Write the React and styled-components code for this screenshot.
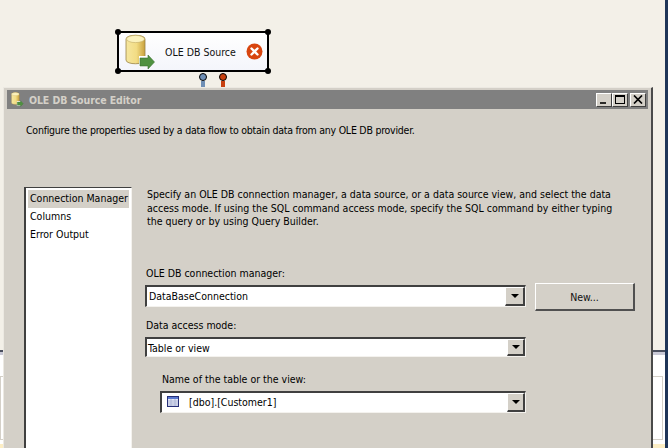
import React from 'react';
import styled, { createGlobalStyle } from 'styled-components';

const GlobalStyle = createGlobalStyle`
  html, body {
    margin: 0;
    height: 100%;
    overflow: hidden;
  }
  body {
    font-family: "DejaVu Sans Condensed", "DejaVu Sans", Tahoma, sans-serif;
    font-size: 10.5px;
    color: #000;
  }
`;

const Page = styled.div`
  position: relative;
  width: 668px;
  height: 448px;
  box-sizing: border-box;
  border-right: 3px solid #1f3558;
  background: #f3f0e8;
  overflow: hidden;
  display: flex;
  flex-direction: column;
`;

const Canvas = styled.div`
  position: relative;
  height: 350px;
  flex: none;
`;

const Node = styled.div`
  position: absolute;
  left: 117px;
  top: 31px;
  width: 152px;
  height: 41px;
  box-sizing: border-box;
  border: 2px solid #000;
  border-radius: 4px;
  background: linear-gradient(#ffffff, #f4f5fb);
  display: flex;
  align-items: center;
  padding: 0 4px 0 6px;
`;

const NodeLabel = styled.span`
  margin-left: 4px;
  flex: 1;
  color: #111;
`;

const Handle = styled.i`
  position: absolute;
  width: 6px;
  height: 6px;
  border-radius: 50%;
  background: #000;
  ${(p) => (p.$top ? 'top: -4px;' : 'bottom: -4px;')}
  ${(p) => (p.$left ? 'left: -4px;' : 'right: -4px;')}
`;

const Port = styled.div`
  position: absolute;
  top: 73px;
  left: ${(p) => p.$x}px;
  width: 8px;
  height: 14px;
  &::before {
    content: '';
    display: block;
    box-sizing: border-box;
    width: 8px;
    height: 8px;
    border-radius: 50%;
    border: 1.5px solid #000;
    background: ${(p) => p.$color};
  }
  &::after {
    content: '';
    display: block;
    width: 4px;
    height: 6px;
    margin-left: 2px;
    background: ${(p) => p.$color};
  }
`;

const BottomPanel = styled.div`
  flex: 1;
  border-top: 2px solid #4a4f5e;
  background: #fff;
  display: flex;
  flex-direction: column;
`;

const PanelStrip = styled.div`
  height: 3px;
  background: #c9c9d6;
`;

const PanelBody = styled.div`
  flex: 1;
  margin: 21px 2px 4px 0;
  border: 1px solid #d4d0c8;
  background: #fff;
`;

const PanelFoot = styled.div`
  height: 4px;
  background: #fdeec4;
`;

const Window = styled.div`
  position: absolute;
  left: 3px;
  top: 87px;
  width: 650px;
  height: 361px;
  box-sizing: border-box;
  padding: 2px 3px 0 3px;
  background: #d4d0c8;
  border-left: 1px solid #ece9e2;
  border-top: 1px solid #ece9e2;
  border-right: 2px solid #4a4a4a;
`;

const TitleBar = styled.div`
  height: 19px;
  background: #808080;
  display: flex;
  align-items: center;
  padding: 0 2px 0 4px;
`;

const TitleText = styled.span`
  margin-left: 3px;
  padding-top: 1px;
  flex: 1;
  font-weight: bold;
  letter-spacing: -0.1px;
  color: #d4d0c8;
`;

const WinButton = styled.button`
  width: 16px;
  height: 14px;
  padding: 0;
  margin-left: ${(p) => (p.$gap ? 2 : 0)}px;
  background: #d4d0c8;
  border: 1px solid;
  border-color: #fff #404040 #404040 #fff;
  display: flex;
  align-items: center;
  justify-content: center;
`;

const Intro = styled.p`
  margin: 0;
  padding: 14px 0 0 19px;
  height: 64px;
  box-sizing: border-box;
  line-height: 14px;
  letter-spacing: -0.24px;
`;

const Body = styled.div`
  display: flex;
  padding-left: 17px;
`;

const NavList = styled.ul`
  width: 108px;
  height: 270px;
  flex: none;
  box-sizing: border-box;
  margin: 14px 0 0;
  padding: 2px;
  list-style: none;
  background: #fff;
  border: 1px solid;
  border-width: 1px 1px 0 2px;
  border-color: #404040 #f4f2ee #404040 #404040;
`;

const NavItem = styled.li`
  height: 18px;
  line-height: 17px;
  padding-left: 2px;
  white-space: nowrap;
  background: ${(p) => (p.$active ? '#d4d0c8' : 'transparent')};
`;

const Content = styled.div`
  margin-left: 13px;
  flex: 1;
  padding-top: 15px;
`;

const Description = styled.p`
  margin: 0 0 0 2px;
  width: 476px;
  height: 78px;
  line-height: 13.5px;
`;

const FieldLabel = styled.label`
  display: block;
  margin: ${(p) => p.$top || 0}px 0 5px ${(p) => (p.$indent ? 17 : 1)}px;
  line-height: 14px;
`;

const Row = styled.div`
  display: flex;
  align-items: flex-start;
  gap: 9px;
  margin-left: ${(p) => (p.$indent ? 15 : 0)}px;
`;

const Combo = styled.div`
  box-sizing: border-box;
  flex: 1;
  max-width: ${(p) => p.$width}px;
  height: ${(p) => p.$height}px;
  display: flex;
  align-items: center;
  background: #fff;
  border: 1px solid;
  border-width: 2px 1px 1px 2px;
  border-color: #404040 #f4f2ee #f4f2ee #404040;
`;

const ComboValue = styled.span`
  flex: 1;
  margin-top: ${(p) => (p.$raised ? -2 : 0)}px;
  padding-left: ${(p) => p.$pad}px;
  display: flex;
  align-items: center;
  gap: 10px;
`;

const ComboArrow = styled.span`
  box-sizing: border-box;
  align-self: stretch;
  width: ${(p) => p.$width}px;
  background: #d4d0c8;
  border: 1px solid;
  border-width: 1px 2px 2px 1px;
  border-color: #fff #404040 #404040 #fff;
  display: flex;
  align-items: center;
  justify-content: center;
  &::after {
    content: '';
    border: 4px solid transparent;
    border-top: 4px solid #000;
    border-bottom: 0;
  }
`;

const PushButton = styled.button`
  width: 100px;
  height: 28px;
  margin: -2px 0 -4px;
  padding: 0;
  font: inherit;
  color: #111;
  background: #d4d0c8;
  border: 1px solid;
  border-width: 1px 2px 2px 1px;
  border-color: #fff #505050 #505050 #fff;
`;

function CylinderIcon({ size = 36 }) {
  return (
    <svg width={size} height={size} viewBox="0 0 36 36">
      <defs>
        <linearGradient id="cyl" x1="0" x2="1" y1="0" y2="0">
          <stop offset="0" stopColor="#f6e7a0" />
          <stop offset="0.55" stopColor="#f2dc84" />
          <stop offset="1" stopColor="#c9a13c" />
        </linearGradient>
      </defs>
      <path d="M1 5 C1 0 20 0 20 5 V26 C20 31 1 31 1 26 Z" fill="url(#cyl)" stroke="#9a8448" strokeWidth="0.8" />
      <ellipse cx="10.5" cy="5" rx="9" ry="3.6" fill="#fbf2bd" stroke="#c2ac68" strokeWidth="0.6" />
      <rect x="14" y="22" width="9" height="11" fill="#fff" />
      <path d="M15 24 H23 V21 L29.5 28 L23 35 V32 H15 Z" fill="#4f9140" stroke="#39702f" strokeWidth="0.6" />
    </svg>
  );
}

function ErrorIcon() {
  return (
    <svg width="17" height="17" viewBox="0 0 17 17">
      <circle cx="8.5" cy="8.5" r="8" fill="#d8450f" />
      <path d="M5.5 5.5 L11.5 11.5 M11.5 5.5 L5.5 11.5" stroke="#fff" strokeWidth="2.4" strokeLinecap="round" />
    </svg>
  );
}

function TableIcon() {
  return (
    <svg width="12" height="11" viewBox="0 0 12 11">
      <rect x="0.5" y="0.5" width="11" height="10" fill="#e4e6f6" stroke="#262f78" />
      <rect x="1" y="1" width="10" height="2" fill="#5a78d0" />
      <path d="M1 5 H11 M1 7 H11 M1 9 H11 M4 3 V10 M8 3 V10" stroke="#a3aed0" strokeWidth="0.8" />
    </svg>
  );
}

function App() {
  return (
    <>
      <GlobalStyle />
      <Page>
        <Canvas>
          <Node>
            <Handle $top $left />
            <Handle $top />
            <Handle $left />
            <Handle />
            <CylinderIcon />
            <NodeLabel>OLE DB Source</NodeLabel>
            <ErrorIcon />
          </Node>
          <Port $x={199} $color="#6f8fb5" />
          <Port $x={219} $color="#c8400f" />
        </Canvas>
        <BottomPanel>
          <PanelStrip />
          <PanelBody />
          <PanelFoot />
        </BottomPanel>

        <Window>
          <TitleBar>
            <CylinderIcon size={15} />
            <TitleText>OLE DB Source Editor</TitleText>
            <WinButton>
              <svg width="10" height="9" viewBox="0 0 10 9"><path d="M1 8 H7" stroke="#000" strokeWidth="1.6" /></svg>
            </WinButton>
            <WinButton>
              <svg width="10" height="9" viewBox="0 0 10 9"><rect x="0.5" y="1" width="9" height="7.5" fill="none" stroke="#000" /><path d="M0 1 H10" stroke="#000" strokeWidth="2" /></svg>
            </WinButton>
            <WinButton $gap>
              <svg width="10" height="9" viewBox="0 0 10 9"><path d="M1 0.5 L9 8.5 M9 0.5 L1 8.5" stroke="#000" strokeWidth="1.7" /></svg>
            </WinButton>
          </TitleBar>
          <Intro>Configure the properties used by a data flow to obtain data from any OLE DB provider.</Intro>
          <Body>
            <NavList>
              <NavItem $active>Connection Manager</NavItem>
              <NavItem>Columns</NavItem>
              <NavItem>Error Output</NavItem>
            </NavList>
            <Content>
              <Description>
                Specify an OLE DB connection manager, a data source, or a data source view, and select the data
                access mode. If using the SQL command access mode, specify the SQL command by either typing
                the query or by using Query Builder.
              </Description>
              <FieldLabel>OLE DB connection manager:</FieldLabel>
              <Row>
                <Combo $width={381} $height={22}>
                  <ComboValue $pad={2} $raised>DataBaseConnection</ComboValue>
                  <ComboArrow $width={20} />
                </Combo>
                <PushButton>New...</PushButton>
              </Row>
              <FieldLabel $top={11}>Data access mode:</FieldLabel>
              <Row>
                <Combo $width={381} $height={20}>
                  <ComboValue $pad={1}>Table or view</ComboValue>
                  <ComboArrow $width={18} />
                </Combo>
              </Row>
              <FieldLabel $top={15} $indent>Name of the table or the view:</FieldLabel>
              <Row $indent>
                <Combo $width={366} $height={22}>
                  <ComboValue $pad={5} $raised>
                    <TableIcon />
                    [dbo].[Customer1]
                  </ComboValue>
                  <ComboArrow $width={18} />
                </Combo>
              </Row>
            </Content>
          </Body>
        </Window>
      </Page>
    </>
  );
}

export default App;
